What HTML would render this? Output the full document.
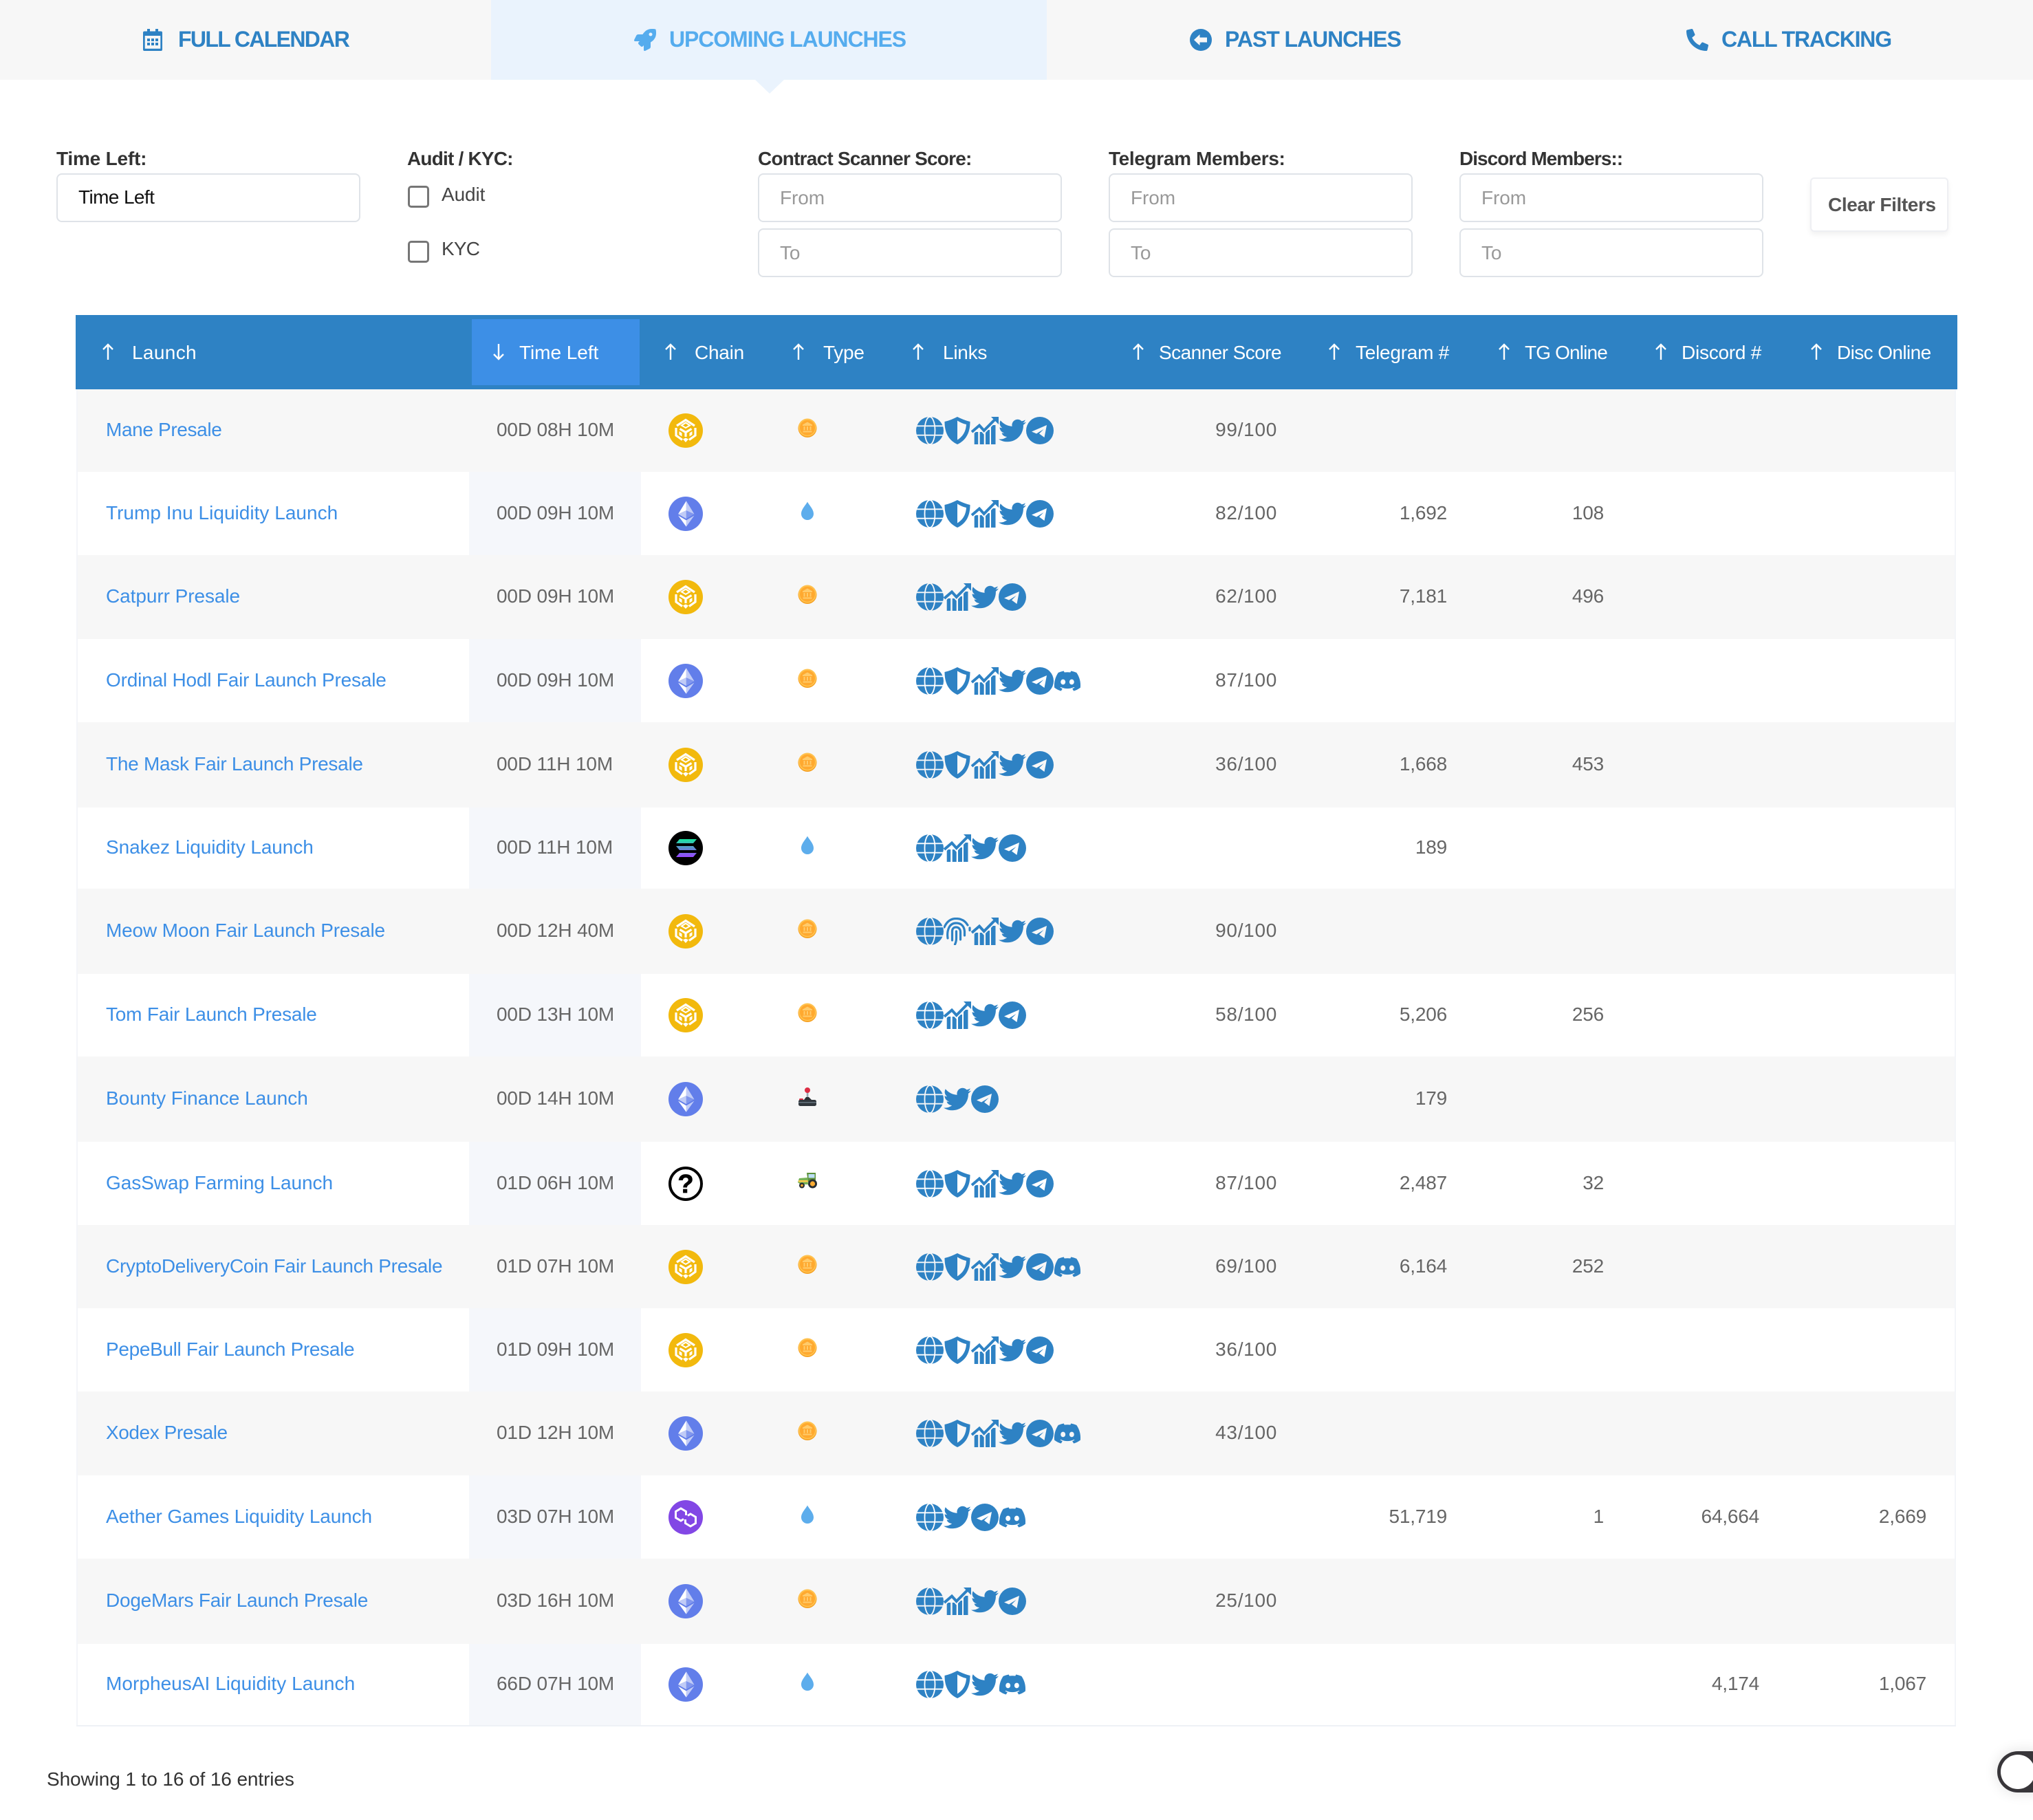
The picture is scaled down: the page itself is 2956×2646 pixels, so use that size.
<!DOCTYPE html>
<html><head><meta charset="utf-8"><title>Upcoming Launches</title>
<style>
html,body{margin:0;padding:0;background:#fff}
body{position:relative;width:2956px;height:2646px;overflow:hidden;font-family:"Liberation Sans",Arial,sans-serif;font-size:28px;color:#666}
.a{position:absolute;white-space:nowrap}
.tab{font-weight:700;font-size:32px;line-height:40px;top:37px;color:#2e82c4}
.lab{font-weight:700;font-size:28px;line-height:36px;top:213px;color:#333;letter-spacing:-.2px}
.inp{box-sizing:border-box;border:2px solid #dfe3e8;border-radius:8px;background:#fff;height:71px;width:442px;color:#999;font-size:28px;line-height:68px;padding-left:30px;letter-spacing:-.1px}
.cb{box-sizing:border-box;width:31px;height:32px;border:3px solid #767676;border-radius:5px;left:593px;background:#fff}
.hd{left:110px;top:458px;width:2736px;height:108px;background:#2e82c4}
.ht{color:#fff;line-height:36px;top:495px;letter-spacing:-.25px}
.ar{top:500px;width:16px;height:23px}
.row{position:absolute;left:0;width:2956px;--b:#f7f7f7}
.row::before{content:"";box-sizing:border-box;position:absolute;left:111px;width:2733px;top:0;bottom:0;border-left:2px solid #f3f5f9;border-right:2px solid #f3f5f9;background:#f7f7f7}
.row.e{--b:#fff}
.row.e::before{background:linear-gradient(#f5f7fb,#f5f7fb) 569px 0/250px 100% no-repeat,#fff}
.c{position:absolute;top:-2px;bottom:0;display:flex;align-items:center;white-space:nowrap;letter-spacing:-.2px}
.n{left:154px;color:#3d8fe6}
.d{left:722px;letter-spacing:-.15px}
.r1{right:1099px;letter-spacing:.7px}.r2{right:852px}.r3{right:624px}.r4{right:398px}.r5{right:155px}
.ch{position:absolute;left:972px;top:50%;margin-top:-25px;width:50px;height:50px}
.ty{position:absolute;left:1160px;top:50%;margin-top:-18px;width:28px;height:28px}
.lk{position:absolute;left:1332px;top:50%;margin-top:-20px;display:flex}
.lk svg{width:40px;height:40px;flex:none;display:block}
svg{overflow:visible}
</style></head><body>
<svg width="0" height="0" style="position:absolute">
<defs>
<linearGradient id="sg" x1="0" y1="0" x2="0" y2="1"><stop offset="0" stop-color="#19e6a0"/><stop offset=".5" stop-color="#5f8fd0"/><stop offset="1" stop-color="#9945ff"/></linearGradient>
<symbol id="g" viewBox="0 0 40 40"><circle cx="20" cy="20" r="20" fill="#2e82c4"/><g fill="none" stroke="var(--b)" stroke-width="1.8"><path d="M0 13.3H40M0 26.7H40"/><ellipse cx="20" cy="20" rx="7.500" ry="20"/></g></symbol>
<symbol id="s" viewBox="0 0 40 40"><path fill="#2e82c4" fill-rule="evenodd" transform="translate(1 0)" d="M19 0C25 3 31 5.500 37.500 7C37.500 20 34 33 19 40C4 33 .5 20 .5 7C7 5.500 13 3 19 0ZM19 5.500V33.500C28 28 31.500 20 32 11C27 10 23 8 19 5.500Z"/></symbol>
<symbol id="f" viewBox="0 0 40 40"><g fill="none" stroke="#2e82c4" stroke-width="3.200" stroke-linecap="round"><path d="M1 14C5 5 11 1.500 18 1.500C25 1.500 31 4 35 11"/><path d="M38 15V18.500"/><path d="M6 30C4.500 19 8 8 18 8C27 8 30 14 30.500 20V26"/><path d="M12.500 33V20C12.500 16 15 14 18 14C22 14 24.500 17 24.500 21V32"/><path d="M18.500 20V30C18.500 34 18 36 16.500 39"/></g></symbol>
<symbol id="c" viewBox="0 0 40 40"><g fill="#2e82c4"><rect x="4.700" y="22" width="5.500" height="18"/><rect x="12.700" y="22" width="6" height="18"/><rect x="21" y="19" width="6" height="21"/><rect x="29" y="12" width="6.500" height="28"/></g><path d="M1 22L12 12.500L18.700 20L35 3.500" fill="none" stroke="var(--b)" stroke-width="7.500"/><path d="M1 22L12 12.500L18.700 20L35 3.500" fill="none" stroke="#2e82c4" stroke-width="4"/><path d="M29 0H40V11Z" fill="#2e82c4"/></symbol>
<symbol id="t" viewBox="0 0 24 24"><path fill="#2e82c4" d="M23.953 4.570a10 10 0 01-2.825.775 4.958 4.958 0 002.163-2.723c-.951.555-2.005.959-3.127 1.184a4.920 4.920 0 00-8.384 4.482C7.690 8.095 4.067 6.130 1.640 3.162a4.822 4.822 0 00-.666 2.475c0 1.710.870 3.213 2.188 4.096a4.904 4.904 0 01-2.228-.616v.060a4.923 4.923 0 003.946 4.827 4.996 4.996 0 01-2.212.085 4.936 4.936 0 004.604 3.417 9.867 9.867 0 01-6.102 2.105c-.390 0-.779-.023-1.170-.067a13.995 13.995 0 007.557 2.209c9.053 0 13.998-7.496 13.998-13.985 0-.210 0-.420-.015-.630A9.935 9.935 0 0024 4.590z"/></symbol>
<symbol id="p" viewBox="0 0 40 40"><circle cx="20" cy="20" r="20" fill="#2e82c4"/><path fill="var(--b)" d="M8 21.500L30 12L26.500 30L19 24.500L25.500 18L15 24.500Z"/></symbol>
<symbol id="m" viewBox="-.6 -.6 25.200 25.200"><path fill="#2e82c4" d="M20.317 4.370a19.791 19.791 0 00-4.885-1.515.074.074 0 00-.079.037c-.211.375-.445.865-.608 1.250-1.845-.276-3.680-.276-5.487 0-.164-.393-.406-.874-.618-1.250a.077.077 0 00-.079-.037 19.736 19.736 0 00-4.885 1.515.070.070 0 00-.032.028C.533 9.046-.319 13.580.099 18.058a.082.082 0 00.031.056c2.053 1.508 4.041 2.423 5.993 3.029a.078.078 0 00.084-.028c.462-.630.873-1.295 1.226-1.994a.076.076 0 00-.042-.106c-.653-.248-1.274-.550-1.872-.892a.077.077 0 01-.008-.128c.126-.094.252-.192.372-.291a.074.074 0 01.078-.011c3.928 1.793 8.180 1.793 12.061 0a.074.074 0 01.079.010c.120.099.246.198.373.292a.077.077 0 01-.007.128 12.299 12.299 0 01-1.873.891.077.077 0 00-.041.107c.360.698.772 1.363 1.225 1.993a.076.076 0 00.084.029c1.961-.607 3.950-1.522 6.002-3.029a.077.077 0 00.031-.055c.500-5.177-.838-9.674-3.548-13.660a.061.061 0 00-.031-.029zM8.020 15.331c-1.183 0-2.157-1.086-2.157-2.419 0-1.333.956-2.419 2.157-2.419 1.211 0 2.176 1.095 2.157 2.419 0 1.333-.956 2.419-2.157 2.419zm7.975 0c-1.183 0-2.157-1.086-2.157-2.419 0-1.333.955-2.419 2.157-2.419 1.211 0 2.176 1.095 2.157 2.419 0 1.333-.946 2.419-2.157 2.419z"/></symbol>
<symbol id="bnb" viewBox="0 0 50 50"><circle cx="25" cy="25" r="25" fill="#f2b90d"/><g fill="none" stroke="#fff" stroke-width="3.200"><path d="M12 18L25 9.500L38 18"/><path d="M16.500 22.500L25 27.500L33.500 22.500"/><path d="M25 27.500V34"/><path d="M11 21V32L20 38.500"/><path d="M39 21V32L30 38.500"/></g><path fill="none" stroke="#fff" stroke-width="2" d="M25 13.500L31 17.500L25 21L19 17.500Z"/><path fill="#fff" d="M21 37.500L25 35.500L29 37.500L25 42ZM15.500 26L19.500 28.500V33.500L15.500 31ZM34.500 26L30.500 28.500V33.500L34.500 31Z"/></symbol>
<symbol id="eth" viewBox="0 0 32 32"><circle cx="16" cy="16" r="16" fill="#627eea"/><g fill="#fff"><path fill-opacity=".6" d="M16.498 4v8.870l7.497 3.350z"/><path d="M16.498 4L9 16.220l7.498-3.350z"/><path fill-opacity=".6" d="M16.498 21.968v6.027L24 17.616z"/><path d="M16.498 27.995v-6.028L9 17.616z"/><path fill-opacity=".2" d="M16.498 20.573l7.497-4.353-7.497-3.348z"/><path fill-opacity=".6" d="M9 16.220l7.498 4.353v-7.701z"/></g></symbol>
<symbol id="sol" viewBox="0 0 50 50"><circle cx="25" cy="25" r="25" fill="#000"/><path fill="url(#sg)" d="M16 12H41L36 18H11ZM11 22H36L41 28H16ZM16 32H41L36 38H11Z"/></symbol>
<symbol id="pol" viewBox="0 0 50 50"><circle cx="25" cy="25" r="25" fill="#8247e5"/><g fill="none" stroke="#fff" stroke-width="3"><path d="M25.500 22V16.500L18 12L10.500 16.500V25.500L18 30L22 27.500"/><path d="M24.500 28V33.500L32 38L39.500 33.500V24.500L32 20L28 22.500"/></g></symbol>
<symbol id="q" viewBox="0 0 50 50"><circle cx="25" cy="25" r="23" fill="#fff" stroke="#000" stroke-width="4"/><text x="25" y="38" font-size="38" font-weight="700" text-anchor="middle" font-family="Liberation Sans,sans-serif" fill="#000" stroke="#000" stroke-width=".8">?</text></symbol>
<symbol id="coin" viewBox="0 0 28 28"><circle cx="14" cy="14.500" r="13.500" fill="#f59c1a"/><circle cx="14" cy="13.500" r="13" fill="#ffc24f"/><circle cx="14" cy="13.700" r="11" fill="#ffa92f"/><path fill="#ffcb6b" d="M14 5.500L21 9.500V11H7V9.500ZM8.500 12H10.500V17.500H8.500ZM13 12H15V17.500H13ZM17.500 12H19.500V17.500H17.500ZM7.500 18.500H20.500V20.500H7.500Z"/></symbol>
<symbol id="drop" viewBox="0 0 28 28"><path fill="#5dadec" d="M14 .5C16 5 23 11 23 18A9 9 0 0 1 5 18C5 11 12 5 14 .5Z"/></symbol>
<symbol id="joy" viewBox="0 0 28 28"><rect x="12.800" y="6" width="2.600" height="12" fill="#99aab5"/><circle cx="14" cy="4" r="4" fill="#dd2e44"/><path d="M9 18L12 14H16L20 18Z" fill="#292f33"/><rect x="2" y="16" width="6" height="3" rx="1.500" fill="#dd2e44"/><rect x="1" y="18" width="26" height="9" rx="2.500" fill="#31373d"/><rect x="1" y="21" width="26" height="1.500" fill="#66757f"/></symbol>
<symbol id="trac" viewBox="0 0 28 24"><path d="M0 15L2 9L14 8L15 18H4Z" fill="#77b255"/><rect x="1" y="12" width="14" height="2.500" fill="#ffcc4d"/><path d="M13 1H26V13L15 15Z" fill="#5c913b"/><rect x="15.500" y="3" width="9" height="5.500" fill="#bbddf5"/><circle cx="6" cy="19.500" r="4" fill="#292f33"/><circle cx="6" cy="19.500" r="1.800" fill="#ffac33"/><circle cx="21.500" cy="17" r="6.500" fill="#292f33"/><circle cx="21.500" cy="17" r="3.600" fill="#ffac33"/></symbol>
</defs>
</svg>

<!-- tabs -->
<div class="a" style="left:0;top:0;width:2956px;height:116px;background:#f7f7f7"></div>
<div class="a" style="left:714px;top:0;width:808px;height:116px;background:#eaf3fd"></div>
<svg class="a" style="left:1098px;top:116px" width="42" height="20"><path d="M0 0H42L21 20Z" fill="#eaf3fd"/></svg>
<svg class="a" style="left:208px;top:42px" width="28" height="32" viewBox="0 0 28 32"><path fill="#2e82c4" fill-rule="evenodd" d="M6 0H10V3.500H18V0H22V3.500H26A2 2 0 0 1 28 5.500V30A2 2 0 0 1 26 32H2A2 2 0 0 1 0 30V5.500A2 2 0 0 1 2 3.500H6ZM2.700 10V28.700H25.300V10ZM6 14H10V18H6ZM12 14H16V18H12ZM18 14H22V18H18ZM6 20H10V24H6ZM12 20H16V24H12ZM18 20H22V24H18Z"/></svg>
<div class="a tab" style="left:259px;letter-spacing:-1.65px">FULL CALENDAR</div>
<svg class="a" style="left:922px;top:42px" width="32" height="32" viewBox="0 0 512 512"><path fill="#55acee" d="M505.120 19.094c-1.189-5.531-6.658-11-12.207-12.188C460.716 0 435.507 0 410.407 0 307.175 0 245.269 55.203 199.052 128H94.838c-16.348.016-35.557 11.875-42.887 26.484L2.516 253.297A28.400 28.400 0 0 0 0 264a24.009 24.009 0 0 0 24.006 24h103.810l-22.475 22.469c-11.365 11.361-12.996 32.258 0 45.250l50.904 50.906c11.156 11.188 32.156 13.156 45.277 0l22.475-22.469V488a24.009 24.009 0 0 0 24.006 24 28.559 28.559 0 0 0 10.707-2.516l98.728-49.391c14.629-7.297 26.508-26.500 26.508-42.859V312.797c72.598-46.313 128.035-108.406 128.035-211.094.000-25.203.000-50.406-6.955-82.609zM384.040 168a40 40 0 1 1 40.010-40 40.023 40.023 0 0 1-40.010 40z"/></svg>
<div class="a tab" style="left:973px;color:#55acee;letter-spacing:-1.1px">UPCOMING LAUNCHES</div>
<svg class="a" style="left:1730px;top:42px" width="32" height="32" viewBox="0 0 32 32"><circle cx="16" cy="16" r="16" fill="#2e82c4"/><path fill="#f7f7f7" d="M6 16L14.500 8V12.500H25V19.500H14.500V24Z"/></svg>
<div class="a tab" style="left:1781px;letter-spacing:-1.07px">PAST LAUNCHES</div>
<svg class="a" style="left:2452px;top:42px" width="32" height="32" viewBox="0 0 512 512"><path fill="#2e82c4" d="M497.390 361.800l-112-48a24 24 0 0 0-28 6.900l-49.600 60.600A370.660 370.660 0 0 1 130.600 204.110l60.600-49.600a23.940 23.940 0 0 0 6.900-28l-48-112A24.160 24.160 0 0 0 122.600.610l-104 24A24 24 0 0 0 0 48c0 256.500 207.900 464 464 464a24 24 0 0 0 23.400-18.600l24-104a24.290 24.290 0 0 0-14.010-27.600z"/></svg>
<div class="a tab" style="left:2503px;letter-spacing:-1.2px">CALL TRACKING</div>

<!-- filters -->
<div class="a lab" style="left:82px">Time Left:</div>
<div class="a lab" style="left:592px;letter-spacing:-.8px">Audit / KYC:</div>
<div class="a lab" style="left:1102px;letter-spacing:-.77px">Contract Scanner Score:</div>
<div class="a lab" style="left:1612px;letter-spacing:-.35px">Telegram Members:</div>
<div class="a lab" style="left:2122px;letter-spacing:-.97px">Discord Members::</div>
<div class="a inp" style="left:82px;top:252px;color:#111;line-height:65px;letter-spacing:-.6px">Time Left</div>
<div class="a cb" style="top:270px"></div>
<div class="a" style="left:642px;top:265px;line-height:36px;color:#444;letter-spacing:-.1px">Audit</div>
<div class="a cb" style="top:350px"></div>
<div class="a" style="left:642px;top:344px;line-height:36px;color:#444;letter-spacing:-.8px">KYC</div>
<div class="a inp" style="left:1102px;top:252px">From</div>
<div class="a inp" style="left:1102px;top:332px">To</div>
<div class="a inp" style="left:1612px;top:252px">From</div>
<div class="a inp" style="left:1612px;top:332px">To</div>
<div class="a inp" style="left:2122px;top:252px">From</div>
<div class="a inp" style="left:2122px;top:332px">To</div>
<div class="a" style="left:2632px;top:258px;width:201px;height:79px;box-sizing:border-box;border:2px solid #eeeff3;border-radius:6px;background:#fff;box-shadow:0 4px 8px rgba(0,0,0,.06);font-weight:700;color:#555;line-height:76px;padding-left:24px;letter-spacing:-.4px">Clear Filters</div>

<!-- table header -->
<div class="a hd"></div>
<div class="a" style="left:686px;top:464px;width:244px;height:96px;background:#3d8fe6"></div>
<svg class="a ar" style="left:149px" viewBox="0 0 16 23"><path d="M8 23V1M1 8L8 1L15 8" fill="none" stroke="#fff" stroke-width="2.400"/></svg>
<div class="a ht" style="left:192px;letter-spacing:.35px">Launch</div>
<svg class="a ar" style="left:717px" viewBox="0 0 16 23"><path d="M8 0V22M1 15L8 22L15 15" fill="none" stroke="#fff" stroke-width="2.400"/></svg>
<div class="a ht" style="left:755px;letter-spacing:-.05px">Time Left</div>
<svg class="a ar" style="left:967px" viewBox="0 0 16 23"><path d="M8 23V1M1 8L8 1L15 8" fill="none" stroke="#fff" stroke-width="2.400"/></svg>
<div class="a ht" style="left:1010px">Chain</div>
<svg class="a ar" style="left:1153px" viewBox="0 0 16 23"><path d="M8 23V1M1 8L8 1L15 8" fill="none" stroke="#fff" stroke-width="2.400"/></svg>
<div class="a ht" style="left:1197px">Type</div>
<svg class="a ar" style="left:1327px" viewBox="0 0 16 23"><path d="M8 23V1M1 8L8 1L15 8" fill="none" stroke="#fff" stroke-width="2.400"/></svg>
<div class="a ht" style="left:1371px">Links</div>
<svg class="a ar" style="left:1647px" viewBox="0 0 16 23"><path d="M8 23V1M1 8L8 1L15 8" fill="none" stroke="#fff" stroke-width="2.400"/></svg>
<div class="a ht" style="left:1685px;letter-spacing:-.55px">Scanner Score</div>
<svg class="a ar" style="left:1932px" viewBox="0 0 16 23"><path d="M8 23V1M1 8L8 1L15 8" fill="none" stroke="#fff" stroke-width="2.400"/></svg>
<div class="a ht" style="left:1971px">Telegram #</div>
<svg class="a ar" style="left:2179px" viewBox="0 0 16 23"><path d="M8 23V1M1 8L8 1L15 8" fill="none" stroke="#fff" stroke-width="2.400"/></svg>
<div class="a ht" style="left:2217px;letter-spacing:-.85px">TG Online</div>
<svg class="a ar" style="left:2407px" viewBox="0 0 16 23"><path d="M8 23V1M1 8L8 1L15 8" fill="none" stroke="#fff" stroke-width="2.400"/></svg>
<div class="a ht" style="left:2445px">Discord #</div>
<svg class="a ar" style="left:2633px" viewBox="0 0 16 23"><path d="M8 23V1M1 8L8 1L15 8" fill="none" stroke="#fff" stroke-width="2.400"/></svg>
<div class="a ht" style="left:2671px;letter-spacing:-.6px">Disc Online</div>

<!-- rows -->
<div class="row" style="top:566px;height:120px"><div class="c n" style="letter-spacing:-.36px">Mane Presale</div><div class="c d">00D 08H 10M</div><svg class="ch"><use href="#bnb"/></svg><svg class="ty"><use href="#coin"/></svg><div class="lk"><svg><use href="#g"/></svg><svg><use href="#s"/></svg><svg><use href="#c"/></svg><svg><use href="#t"/></svg><svg><use href="#p"/></svg></div><div class="c r1">99/100</div></div>
<div class="row e" style="top:686px;height:121px"><div class="c n" style="letter-spacing:.02px">Trump Inu Liquidity Launch</div><div class="c d">00D 09H 10M</div><svg class="ch"><use href="#eth"/></svg><svg class="ty"><use href="#drop"/></svg><div class="lk"><svg><use href="#g"/></svg><svg><use href="#s"/></svg><svg><use href="#c"/></svg><svg><use href="#t"/></svg><svg><use href="#p"/></svg></div><div class="c r1">82/100</div><div class="c r2">1,692</div><div class="c r3">108</div></div>
<div class="row" style="top:807px;height:122px"><div class="c n" style="letter-spacing:-.07px">Catpurr Presale</div><div class="c d">00D 09H 10M</div><svg class="ch"><use href="#bnb"/></svg><svg class="ty"><use href="#coin"/></svg><div class="lk"><svg><use href="#g"/></svg><svg><use href="#c"/></svg><svg><use href="#t"/></svg><svg><use href="#p"/></svg></div><div class="c r1">62/100</div><div class="c r2">7,181</div><div class="c r3">496</div></div>
<div class="row e" style="top:929px;height:121px"><div class="c n">Ordinal Hodl Fair Launch Presale</div><div class="c d">00D 09H 10M</div><svg class="ch"><use href="#eth"/></svg><svg class="ty"><use href="#coin"/></svg><div class="lk"><svg><use href="#g"/></svg><svg><use href="#s"/></svg><svg><use href="#c"/></svg><svg><use href="#t"/></svg><svg><use href="#p"/></svg><svg><use href="#m"/></svg></div><div class="c r1">87/100</div></div>
<div class="row" style="top:1050px;height:124px"><div class="c n" style="letter-spacing:-.27px">The Mask Fair Launch Presale</div><div class="c d">00D 11H 10M</div><svg class="ch"><use href="#bnb"/></svg><svg class="ty"><use href="#coin"/></svg><div class="lk"><svg><use href="#g"/></svg><svg><use href="#s"/></svg><svg><use href="#c"/></svg><svg><use href="#t"/></svg><svg><use href="#p"/></svg></div><div class="c r1">36/100</div><div class="c r2">1,668</div><div class="c r3">453</div></div>
<div class="row e" style="top:1174px;height:118px"><div class="c n" style="letter-spacing:-.08px">Snakez Liquidity Launch</div><div class="c d">00D 11H 10M</div><svg class="ch"><use href="#sol"/></svg><svg class="ty"><use href="#drop"/></svg><div class="lk"><svg><use href="#g"/></svg><svg><use href="#c"/></svg><svg><use href="#t"/></svg><svg><use href="#p"/></svg></div><div class="c r2">189</div></div>
<div class="row" style="top:1292px;height:124px"><div class="c n" style="letter-spacing:-.17px">Meow Moon Fair Launch Presale</div><div class="c d">00D 12H 40M</div><svg class="ch"><use href="#bnb"/></svg><svg class="ty"><use href="#coin"/></svg><div class="lk"><svg><use href="#g"/></svg><svg><use href="#f"/></svg><svg><use href="#c"/></svg><svg><use href="#t"/></svg><svg><use href="#p"/></svg></div><div class="c r1">90/100</div></div>
<div class="row e" style="top:1416px;height:120px"><div class="c n">Tom Fair Launch Presale</div><div class="c d">00D 13H 10M</div><svg class="ch"><use href="#bnb"/></svg><svg class="ty"><use href="#coin"/></svg><div class="lk"><svg><use href="#g"/></svg><svg><use href="#c"/></svg><svg><use href="#t"/></svg><svg><use href="#p"/></svg></div><div class="c r1">58/100</div><div class="c r2">5,206</div><div class="c r3">256</div></div>
<div class="row" style="top:1536px;height:124px"><div class="c n" style="letter-spacing:-.02px">Bounty Finance Launch</div><div class="c d">00D 14H 10M</div><svg class="ch"><use href="#eth"/></svg><svg class="ty" style="margin-top:-17px"><use href="#joy"/></svg><div class="lk"><svg><use href="#g"/></svg><svg><use href="#t"/></svg><svg><use href="#p"/></svg></div><div class="c r2">179</div></div>
<div class="row e" style="top:1660px;height:121px"><div class="c n" style="letter-spacing:-.07px">GasSwap Farming Launch</div><div class="c d">01D 06H 10M</div><svg class="ch"><use href="#q"/></svg><svg class="ty" style="margin-top:-19px"><use href="#trac"/></svg><div class="lk"><svg><use href="#g"/></svg><svg><use href="#s"/></svg><svg><use href="#c"/></svg><svg><use href="#t"/></svg><svg><use href="#p"/></svg></div><div class="c r1">87/100</div><div class="c r2">2,487</div><div class="c r3">32</div></div>
<div class="row" style="top:1781px;height:121px"><div class="c n" style="letter-spacing:-.27px">CryptoDeliveryCoin Fair Launch Presale</div><div class="c d">01D 07H 10M</div><svg class="ch"><use href="#bnb"/></svg><svg class="ty"><use href="#coin"/></svg><div class="lk"><svg><use href="#g"/></svg><svg><use href="#s"/></svg><svg><use href="#c"/></svg><svg><use href="#t"/></svg><svg><use href="#p"/></svg><svg><use href="#m"/></svg></div><div class="c r1">69/100</div><div class="c r2">6,164</div><div class="c r3">252</div></div>
<div class="row e" style="top:1902px;height:121px"><div class="c n" style="letter-spacing:-.33px">PepeBull Fair Launch Presale</div><div class="c d">01D 09H 10M</div><svg class="ch"><use href="#bnb"/></svg><svg class="ty"><use href="#coin"/></svg><div class="lk"><svg><use href="#g"/></svg><svg><use href="#s"/></svg><svg><use href="#c"/></svg><svg><use href="#t"/></svg><svg><use href="#p"/></svg></div><div class="c r1">36/100</div></div>
<div class="row" style="top:2023px;height:122px"><div class="c n" style="letter-spacing:-.42px">Xodex Presale</div><div class="c d">01D 12H 10M</div><svg class="ch"><use href="#eth"/></svg><svg class="ty"><use href="#coin"/></svg><div class="lk"><svg><use href="#g"/></svg><svg><use href="#s"/></svg><svg><use href="#c"/></svg><svg><use href="#t"/></svg><svg><use href="#p"/></svg><svg><use href="#m"/></svg></div><div class="c r1">43/100</div></div>
<div class="row e" style="top:2145px;height:121px"><div class="c n" style="letter-spacing:-.13px">Aether Games Liquidity Launch</div><div class="c d">03D 07H 10M</div><svg class="ch"><use href="#pol"/></svg><svg class="ty"><use href="#drop"/></svg><div class="lk"><svg><use href="#g"/></svg><svg><use href="#t"/></svg><svg><use href="#p"/></svg><svg><use href="#m"/></svg></div><div class="c r2">51,719</div><div class="c r3">1</div><div class="c r4">64,664</div><div class="c r5">2,669</div></div>
<div class="row" style="top:2266px;height:124px"><div class="c n" style="letter-spacing:-.23px">DogeMars Fair Launch Presale</div><div class="c d">03D 16H 10M</div><svg class="ch"><use href="#eth"/></svg><svg class="ty"><use href="#coin"/></svg><div class="lk"><svg><use href="#g"/></svg><svg><use href="#c"/></svg><svg><use href="#t"/></svg><svg><use href="#p"/></svg></div><div class="c r1">25/100</div></div>
<div class="row e" style="top:2390px;height:118px"><div class="c n" style="letter-spacing:.04px">MorpheusAI Liquidity Launch</div><div class="c d">66D 07H 10M</div><svg class="ch"><use href="#eth"/></svg><svg class="ty"><use href="#drop"/></svg><div class="lk"><svg><use href="#g"/></svg><svg><use href="#s"/></svg><svg><use href="#t"/></svg><svg><use href="#m"/></svg></div><div class="c r4">4,174</div><div class="c r5">1,067</div></div>
<div class="a" style="left:111px;top:2508px;width:2733px;height:2px;background:#eef1f6"></div>

<!-- footer -->
<div class="a" style="left:68px;top:2569px;line-height:36px;color:#333;letter-spacing:-.1px">Showing 1 to 16 of 16 entries</div>
<div class="a" style="left:2904px;top:2546px;width:80px;height:60px;border-radius:30px;background:#38363a;box-shadow:0 0 20px rgba(0,0,0,.12)"></div>
<div class="a" style="left:2909px;top:2551px;width:50px;height:50px;border-radius:50%;background:#fff"></div>
</body></html>
